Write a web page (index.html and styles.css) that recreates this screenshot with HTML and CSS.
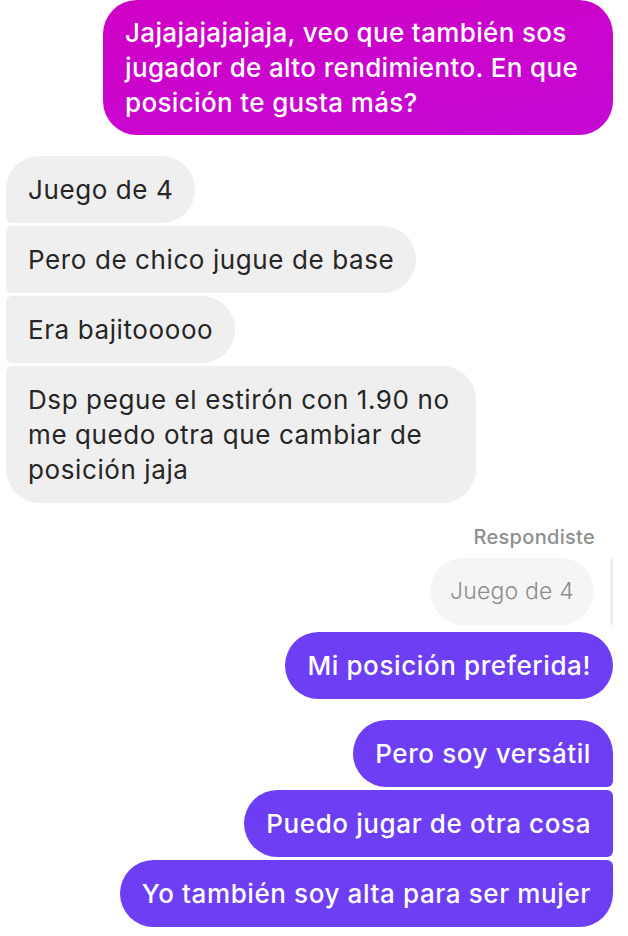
FILE: index.html
```html
<!DOCTYPE html>
<html lang="es">
<head>
<meta charset="utf-8">
<link rel="stylesheet" href="styles.css">
</head>
<body>
<div class="chat">
  <div class="row out">
    <div class="bubble magenta solo">Jajajajajajaja, veo que también sos jugador de alto rendimiento. En que posición te gusta más?</div>
  </div>

  <div class="group in-group">
    <div class="row in"><div class="bubble gray first">Juego de 4</div></div>
    <div class="row in"><div class="bubble gray mid">Pero de chico jugue de base</div></div>
    <div class="row in"><div class="bubble gray mid">Era bajitooooo</div></div>
    <div class="row in"><div class="bubble gray last wide">Dsp pegue el estirón con 1.90 no me quedo otra que cambiar de posición jaja</div></div>
  </div>

  <div class="reply-label">Respondiste</div>
  <div class="row out reply-row">
    <div class="quoted">Juego de 4</div>
    <div class="reply-bar"></div>
  </div>
  <div class="row out reply-main">
    <div class="bubble purple solo">Mi posición preferida!</div>
  </div>

  <div class="group out-group">
    <div class="row out"><div class="bubble purple first">Pero soy versátil</div></div>
    <div class="row out"><div class="bubble purple mid">Puedo jugar de otra cosa</div></div>
    <div class="row out"><div class="bubble purple last">Yo también soy alta para ser mujer</div></div>
  </div>
</div>
</body>
</html>
```

FILE: styles.css
```css
* { box-sizing: border-box; }
html, body {
  margin: 0;
  padding: 0;
  background: #ffffff;
  width: 628px;
  height: 936px;
  overflow: hidden;
}
body {
  font-family: Inter, "Open Sans", Roboto, "Liberation Sans", sans-serif;
}
.chat {
  display: flex;
  flex-direction: column;
  padding: 0 15px 0 6px;
}
.row {
  display: flex;
}
.row.out { justify-content: flex-end; }
.row.in { justify-content: flex-start; }

.bubble {
  font-size: 26px;
  letter-spacing: 0.6px;
  line-height: 35px;
  padding: 16px 22px;
  border-radius: 34px;
  max-width: 514px;
}
.gray {
  background: #efefef;
  color: #262626;
  font-weight: 400;
  letter-spacing: 0.6px;
  max-width: 470px;
}
.magenta {
  background: linear-gradient(170deg, #d000c6 0%, #c40ad4 100%);
  color: #ffffff;
  font-weight: 500;
  letter-spacing: 0.35px;
  padding: 15px 22px;
  max-width: 510px;
}
.purple {
  background: #6e3ef4;
  color: #ffffff;
  font-weight: 500;
}
.in .first { border-bottom-left-radius: 6px; }
.in .mid { border-top-left-radius: 6px; border-bottom-left-radius: 6px; }
.in .last { border-top-left-radius: 6px; }
.out .first { border-bottom-right-radius: 6px; }
.out .mid { border-top-right-radius: 6px; border-bottom-right-radius: 6px; }
.out .last { border-top-right-radius: 6px; }

.in-group {
  display: flex;
  flex-direction: column;
  gap: 3px;
  margin-top: 21px;
}
.out-group {
  display: flex;
  flex-direction: column;
  gap: 3px;
  margin-top: 21px;
}
.reply-label {
  margin-top: 21px;
  align-self: flex-end;
  margin-right: 18px;
  font-size: 20px;
  letter-spacing: 0.3px;
  line-height: 26px;
  color: #8e8e8e;
  font-weight: 500;
}
.reply-row {
  margin-top: 8px;
  align-items: stretch;
  gap: 16px;
}
.quoted {
  background: #f5f5f5;
  color: #8e8e8e;
  font-size: 23px;
  letter-spacing: 0.2px;
  line-height: 35px;
  padding: 16px 20px;
  border-radius: 34px;
  font-weight: 300;
}
.reply-bar {
  width: 3px;
  background: #efefef;
  border-radius: 2px;
}
.reply-main {
  margin-top: 7px;
}
```
